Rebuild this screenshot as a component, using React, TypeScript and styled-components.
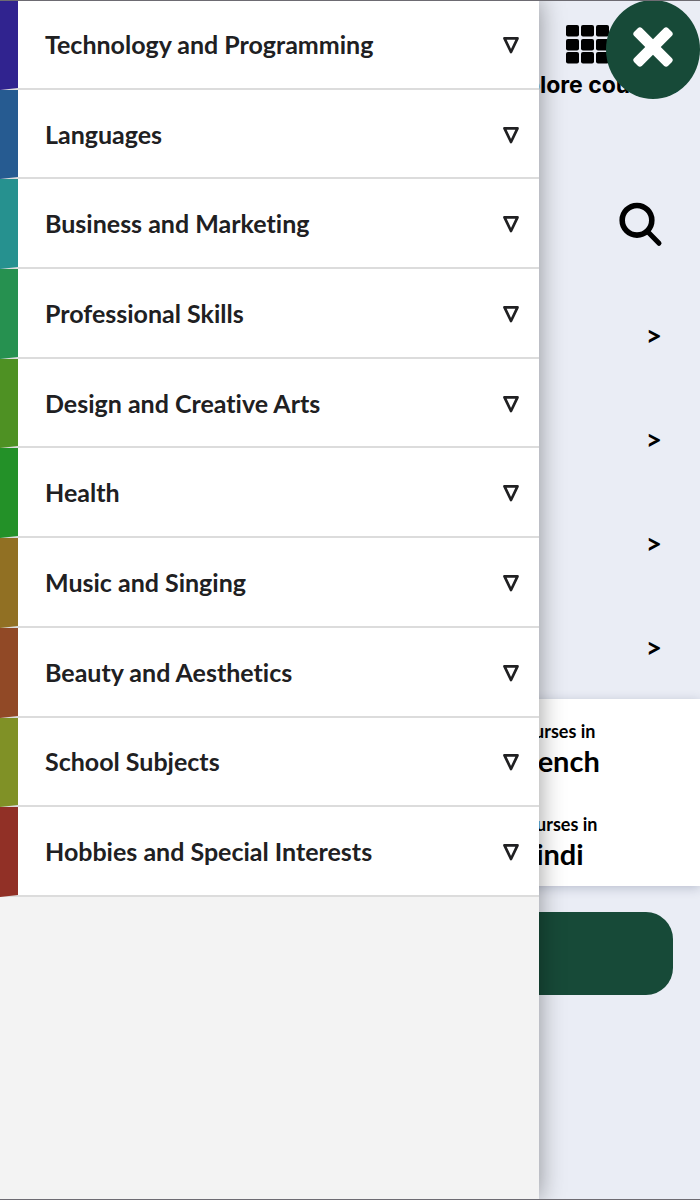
import React from "react";
import styled, { createGlobalStyle } from "styled-components";

const GlobalStyle = createGlobalStyle`
  *, *::before, *::after { box-sizing: border-box; }
  body {
    margin: 0;
    background: #eaedf5;
    color: #000;
    font-family: Lato, "Liberation Sans", sans-serif;
    font-variant-ligatures: none;
  }
  button { font: inherit; font-variant-ligatures: none; color: inherit; margin: 0; }
`;

const Shell = styled.div`
  position: relative;
  min-height: 100vh;
  overflow: hidden;

  &::after {
    content: "";
    position: absolute;
    inset: 0;
    border: 0 solid #6d6b72;
    border-width: 1px 0;
    pointer-events: none;
  }
`;

const Page = styled.main`
  display: flex;
  flex-direction: column;
`;

const Header = styled.header`
  display: flex;
  justify-content: flex-end;
  padding: 25px 21px 0 0;
`;

const ExploreButton = styled.button`
  display: flex;
  flex-direction: column;
  align-items: center;
  gap: 8px;
  padding: 0;
  border: 0;
  background: none;
  font-family: Inter, "Liberation Sans", sans-serif;
  font-size: 23px;
  font-weight: 700;
  line-height: 26px;
`;

const SearchBar = styled.div`
  display: flex;
  justify-content: flex-end;
  padding: 104px 37px 0 0;
`;

const IconButton = styled.button`
  display: flex;
  padding: 0;
  border: 0;
  background: none;
`;

const LinkList = styled.nav`
  display: flex;
  flex-direction: column;
  padding: 36px 38px 0 0;
`;

const MoreLink = styled.a`
  display: flex;
  align-items: center;
  justify-content: flex-end;
  height: 104px;
  color: #000;
  font-size: 28px;
  font-weight: 700;
  text-decoration: none;
`;

const CoursePanel = styled.section`
  display: flex;
  flex-direction: column;
  align-items: flex-end;
  padding-bottom: 1px;
  background: #fff;
  box-shadow: 0 2px 10px rgba(40, 50, 90, 0.25);
`;

const CourseLink = styled.a<{ $inset: number }>`
  display: flex;
  flex-direction: column;
  width: 194px;
  height: 93px;
  padding: 20px 0 0 ${(p) => p.$inset}px;
  color: #000;
  font-weight: 700;
  text-decoration: none;
`;

const CourseLead = styled.span`
  font-size: 18px;
  line-height: 24px;
`;

const CourseName = styled.span`
  font-size: 29px;
  line-height: 36px;
`;

const PrimaryButton = styled.button`
  height: 83px;
  margin: 26px 27px 0;
  border: 0;
  border-radius: 27px;
  background: #174a38;
`;

const Drawer = styled.aside`
  position: absolute;
  top: 0;
  bottom: 0;
  left: 0;
  width: 77%;
  background: #f3f3f3;
  box-shadow: 0 0 24px rgba(0, 0, 0, 0.4);
`;

const CategoryList = styled.ul`
  display: grid;
  grid-auto-rows: 1fr;
  height: 897px;
  margin: 0;
  padding: 0;
  list-style: none;
`;

const CategoryItem = styled.li`
  display: flex;
`;

const CategoryButton = styled.button<{ $color: string }>`
  display: flex;
  flex: 1;
  align-items: center;
  justify-content: space-between;
  padding: 0 20px 0 27px;
  border: 0 solid #dcdcdc;
  border-bottom-width: 2px;
  border-left: 18px solid ${(p) => p.$color};
  background: #fff;
  color: #202022;
  font-size: 25px;
  font-weight: 700;
  line-height: 32px;
  text-align: left;
`;

const CloseButton = styled.button`
  position: absolute;
  top: 0;
  right: 0;
  display: flex;
  align-items: center;
  justify-content: center;
  width: 94px;
  height: 99px;
  padding: 0 0 6px;
  border: 0;
  border-radius: 50%;
  background: #174a38;
`;

const categories = [
  { name: "Technology and Programming", color: "#30238f" },
  { name: "Languages", color: "#265b91" },
  { name: "Business and Marketing", color: "#26918f" },
  { name: "Professional Skills", color: "#269150" },
  { name: "Design and Creative Arts", color: "#4e9123" },
  { name: "Health", color: "#239128" },
  { name: "Music and Singing", color: "#917023" },
  { name: "Beauty and Aesthetics", color: "#914926" },
  { name: "School Subjects", color: "#809126" },
  { name: "Hobbies and Special Interests", color: "#913026" },
];

const topics = ["first", "second", "third", "fourth"];

const courses = [
  { name: "French", inset: 6 },
  { name: "Hindi", inset: 8 },
];

const GridIcon = () => (
  <svg width="48" height="39" viewBox="0 0 48 39" aria-hidden="true">
    {[0, 14, 27].map((y) =>
      [0, 15, 30].map((x) => (
        <rect key={`${x}-${y}`} x={x + 1} y={y} width="13" height="11.5" rx="2" />
      ))
    )}
  </svg>
);

const SearchIcon = () => (
  <svg width="45" height="45" viewBox="0 0 45 45" fill="none" stroke="#000" aria-hidden="true">
    <circle cx="19" cy="18.3" r="14.8" strokeWidth="5.6" />
    <path d="M30 30 41 41.3" strokeWidth="5" strokeLinecap="round" />
  </svg>
);

const TriangleIcon = () => (
  <svg width="16" height="20" viewBox="0 0 16 20" fill="none" stroke="#202022" aria-hidden="true">
    <path d="M1.5 4.3H14.5L8 18Z" strokeWidth="2.7" strokeLinejoin="round" />
  </svg>
);

const CloseIcon = () => (
  <svg width="40" height="40" viewBox="0 0 40 40" aria-hidden="true">
    <g fill="#fff">
      <rect x="-4" y="14.5" width="48" height="11" rx="3" transform="rotate(45 20 20)" />
      <rect x="-4" y="14.5" width="48" height="11" rx="3" transform="rotate(-45 20 20)" />
    </g>
  </svg>
);

export default function App() {
  return (
    <>
      <GlobalStyle />
      <Shell>
        <Page>
          <Header>
            <ExploreButton type="button">
              <GridIcon />
              Explore courses
            </ExploreButton>
          </Header>
          <SearchBar>
            <IconButton type="button" aria-label="Search">
              <SearchIcon />
            </IconButton>
          </SearchBar>
          <LinkList>
            {topics.map((topic) => (
              <MoreLink key={topic} href="#">
                &gt;
              </MoreLink>
            ))}
          </LinkList>
          <CoursePanel>
            {courses.map((course) => (
              <CourseLink key={course.name} href="#" $inset={course.inset}>
                <CourseLead>Courses in</CourseLead>
                <CourseName>{course.name}</CourseName>
              </CourseLink>
            ))}
          </CoursePanel>
          <PrimaryButton type="button" aria-label="Continue" />
        </Page>
        <Drawer>
          <CategoryList>
            {categories.map((category) => (
              <CategoryItem key={category.name}>
                <CategoryButton type="button" $color={category.color}>
                  {category.name}
                  <TriangleIcon />
                </CategoryButton>
              </CategoryItem>
            ))}
          </CategoryList>
        </Drawer>
        <CloseButton type="button" aria-label="Close menu">
          <CloseIcon />
        </CloseButton>
      </Shell>
    </>
  );
}
